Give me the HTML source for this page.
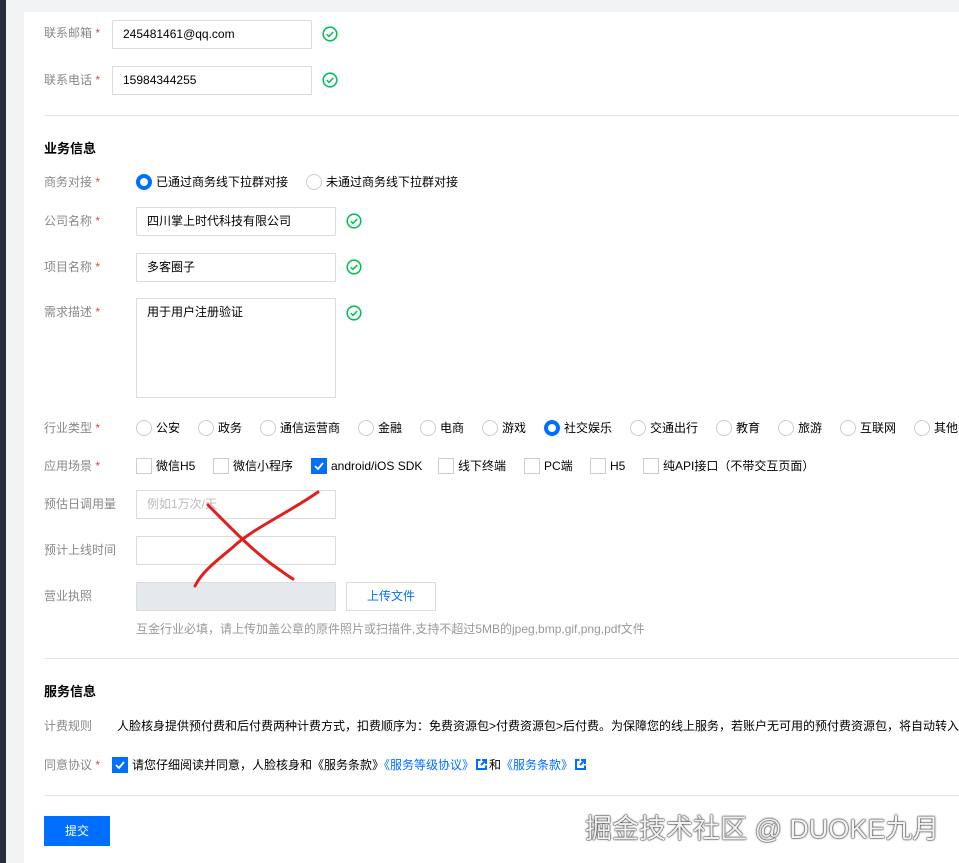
<!DOCTYPE html>
<html><head><meta charset="utf-8"><style>
*{margin:0;padding:0;box-sizing:border-box}
body{width:959px;height:863px;overflow:hidden;background:#f2f3f5;font-family:"Liberation Sans","Noto Sans CJK SC",sans-serif;font-size:12px;color:#000;position:relative}
.a{position:absolute;white-space:nowrap}
.lb{color:#888;line-height:16px}
.st{color:#e54545}
.in{position:absolute;border:1px solid #dcdcdc;background:#fff;height:29px;padding:0 10px;line-height:27px;color:#000}
.ok{position:absolute;width:16px;height:16px}
.r{position:absolute;width:16px;height:16px;border:1px solid #ccc;border-radius:50%;background:#fff}
.r.on{border:4px solid #006eff}
.c{position:absolute;width:16px;height:16px;border:1px solid #ccc;background:#fff}
.c.on{background:#006eff;border-color:#006eff}
.t{position:absolute;line-height:16px;white-space:nowrap;color:#000}
.hr{position:absolute;left:44px;right:0;height:1px;background:#e5e5e5}
.b{font-weight:bold;font-size:13px}
.lk{display:inline-block;width:11px;height:11px;vertical-align:-1px;margin:0 2px}
</style></head><body>
<div class="a" style="left:0;top:0;width:6px;height:863px;background:#2a2e38"></div>
<div class="a" style="left:24px;top:12px;width:935px;height:851px;background:#fff"></div>

<div class="a lb" style="left:44px;top:25px">联系邮箱 <span class="st">*</span></div>
<div class="in" style="left:112px;top:20px;width:200px">245481461@qq.com</div>
<svg class="ok" style="left:322px;top:26px" viewBox="0 0 16 16"><circle cx="8" cy="8" r="6.8" fill="none" stroke="#0abf5b" stroke-width="1.6"/><path d="M4.8 8.2l2.2 2.2 4.2-4.4" fill="none" stroke="#0abf5b" stroke-width="1.6"/></svg>
<div class="a lb" style="left:44px;top:72px">联系电话 <span class="st">*</span></div>
<div class="in" style="left:112px;top:66px;width:200px">15984344255</div>
<svg class="ok" style="left:322px;top:72px" viewBox="0 0 16 16"><circle cx="8" cy="8" r="6.8" fill="none" stroke="#0abf5b" stroke-width="1.6"/><path d="M4.8 8.2l2.2 2.2 4.2-4.4" fill="none" stroke="#0abf5b" stroke-width="1.6"/></svg>
<div class="hr" style="top:115px"></div>

<div class="a b" style="left:44px;top:138px">业务信息</div>
<div class="a lb" style="left:44px;top:174px">商务对接 <span class="st">*</span></div>
<div class="r on" style="left:136px;top:174px"></div><div class="t" style="left:156px;top:174px">已通过商务线下拉群对接</div>
<div class="r" style="left:306px;top:174px"></div><div class="t" style="left:326px;top:174px">未通过商务线下拉群对接</div>

<div class="a lb" style="left:44px;top:213px">公司名称 <span class="st">*</span></div>
<div class="in" style="left:136px;top:207px;width:200px">四川掌上时代科技有限公司</div>
<svg class="ok" style="left:346px;top:213px" viewBox="0 0 16 16"><circle cx="8" cy="8" r="6.8" fill="none" stroke="#0abf5b" stroke-width="1.6"/><path d="M4.8 8.2l2.2 2.2 4.2-4.4" fill="none" stroke="#0abf5b" stroke-width="1.6"/></svg>
<div class="a lb" style="left:44px;top:259px">项目名称 <span class="st">*</span></div>
<div class="in" style="left:136px;top:253px;width:200px">多客圈子</div>
<svg class="ok" style="left:346px;top:259px" viewBox="0 0 16 16"><circle cx="8" cy="8" r="6.8" fill="none" stroke="#0abf5b" stroke-width="1.6"/><path d="M4.8 8.2l2.2 2.2 4.2-4.4" fill="none" stroke="#0abf5b" stroke-width="1.6"/></svg>
<div class="a lb" style="left:44px;top:304px">需求描述 <span class="st">*</span></div>
<div class="in" style="left:136px;top:298px;width:200px;height:100px;line-height:16px;padding-top:5px">用于用户注册验证</div>
<svg class="ok" style="left:346px;top:305px" viewBox="0 0 16 16"><circle cx="8" cy="8" r="6.8" fill="none" stroke="#0abf5b" stroke-width="1.6"/><path d="M4.8 8.2l2.2 2.2 4.2-4.4" fill="none" stroke="#0abf5b" stroke-width="1.6"/></svg>

<div class="a lb" style="left:44px;top:420px">行业类型 <span class="st">*</span></div>
<div class="r" style="left:136px;top:420px"></div><div class="t" style="left:156px;top:420px">公安</div>
<div class="r" style="left:198px;top:420px"></div><div class="t" style="left:218px;top:420px">政务</div>
<div class="r" style="left:260px;top:420px"></div><div class="t" style="left:280px;top:420px">通信运营商</div>
<div class="r" style="left:358px;top:420px"></div><div class="t" style="left:378px;top:420px">金融</div>
<div class="r" style="left:420px;top:420px"></div><div class="t" style="left:440px;top:420px">电商</div>
<div class="r" style="left:482px;top:420px"></div><div class="t" style="left:502px;top:420px">游戏</div>
<div class="r on" style="left:544px;top:420px"></div><div class="t" style="left:564px;top:420px">社交娱乐</div>
<div class="r" style="left:630px;top:420px"></div><div class="t" style="left:650px;top:420px">交通出行</div>
<div class="r" style="left:716px;top:420px"></div><div class="t" style="left:736px;top:420px">教育</div>
<div class="r" style="left:778px;top:420px"></div><div class="t" style="left:798px;top:420px">旅游</div>
<div class="r" style="left:840px;top:420px"></div><div class="t" style="left:860px;top:420px">互联网</div>
<div class="r" style="left:914px;top:420px"></div><div class="t" style="left:934px;top:420px">其他</div>

<div class="a lb" style="left:44px;top:458px">应用场景 <span class="st">*</span></div>
<div class="c" style="left:136px;top:458px"></div><div class="t" style="left:156px;top:458px">微信H5</div>
<div class="c" style="left:213px;top:458px"></div><div class="t" style="left:233px;top:458px">微信小程序</div>
<div class="c on" style="left:311px;top:458px"><svg width="14" height="14" viewBox="0 0 14 14"><path d="M3 7l3 3 5-6" fill="none" stroke="#fff" stroke-width="1.8"/></svg></div><div class="t" style="left:331px;top:458px">android/iOS SDK</div>
<div class="c" style="left:438px;top:458px"></div><div class="t" style="left:458px;top:458px">线下终端</div>
<div class="c" style="left:524px;top:458px"></div><div class="t" style="left:544px;top:458px">PC端</div>
<div class="c" style="left:590px;top:458px"></div><div class="t" style="left:610px;top:458px">H5</div>
<div class="c" style="left:643px;top:458px"></div><div class="t" style="left:663px;top:458px">纯API接口（不带交互页面）</div>

<div class="a lb" style="left:44px;top:496px">预估日调用量</div>
<div class="in" style="left:136px;top:490px;width:200px;color:#bbb">例如1万次/天</div>
<div class="a lb" style="left:44px;top:542px">预计上线时间</div>
<div class="in" style="left:136px;top:536px;width:200px"></div>
<div class="a lb" style="left:44px;top:588px">营业执照</div>
<div class="in" style="left:136px;top:582px;width:200px;background:#e5e8ec"></div>
<div class="in" style="left:346px;top:582px;width:90px;text-align:center;color:#006eff;padding:0">上传文件</div>
<div class="a" style="left:136px;top:621px;color:#999;line-height:16px">互金行业必填，请上传加盖公章的原件照片或扫描件,支持不超过5MB的jpeg,bmp,gif,png,pdf文件</div>
<svg class="a" style="left:0;top:0" width="959" height="863"><path d="M318 492C290 512 250 530 232 548C215 562 202 572 195 586" fill="none" stroke="#e0201a" stroke-width="3" stroke-linecap="round"/><path d="M208 505C228 525 250 548 270 563C280 570 288 576 293 579" fill="none" stroke="#e0201a" stroke-width="3" stroke-linecap="round"/></svg>

<div class="hr" style="top:658px"></div>
<div class="a b" style="left:44px;top:681px">服务信息</div>
<div class="a lb" style="left:44px;top:718px">计费规则</div>
<div class="t" style="left:117px;top:718px">人脸核身提供预付费和后付费两种计费方式，扣费顺序为：免费资源包&gt;付费资源包&gt;后付费。为保障您的线上服务，若账户无可用的预付费资源包，将自动转入</div>
<div class="a lb" style="left:44px;top:757px">同意协议 <span class="st">*</span></div>
<div class="c on" style="left:112px;top:757px"><svg width="14" height="14" viewBox="0 0 14 14"><path d="M3 7l3 3 5-6" fill="none" stroke="#fff" stroke-width="1.8"/></svg></div>
<div class="t" style="left:132px;top:757px">请您仔细阅读并同意，人脸核身和《服务条款》<span style="color:#006eff">《服务等级协议》</span><svg class="lk" viewBox="0 0 11 11"><path d="M4.5 1H1v9h9V6.5" fill="none" stroke="#006eff" stroke-width="2"/><path d="M6 1h4v4M10 1L5 6" fill="none" stroke="#006eff" stroke-width="2"/></svg>和<span style="color:#006eff">《服务条款》</span><svg class="lk" viewBox="0 0 11 11"><path d="M4.5 1H1v9h9V6.5" fill="none" stroke="#006eff" stroke-width="2"/><path d="M6 1h4v4M10 1L5 6" fill="none" stroke="#006eff" stroke-width="2"/></svg></div>
<div class="hr" style="top:795px"></div>
<div class="a" style="left:44px;top:816px;width:66px;height:30px;background:#006eff;color:#fff;text-align:center;line-height:30px">提交</div>
<div class="a" style="left:585px;top:807px;font-size:27px;color:#f2f2f2;text-shadow:0 0 2px #333,0 0 1px #333,0 0 1px #333">掘金技术社区 @ DUOKE九月</div>
</body></html>
